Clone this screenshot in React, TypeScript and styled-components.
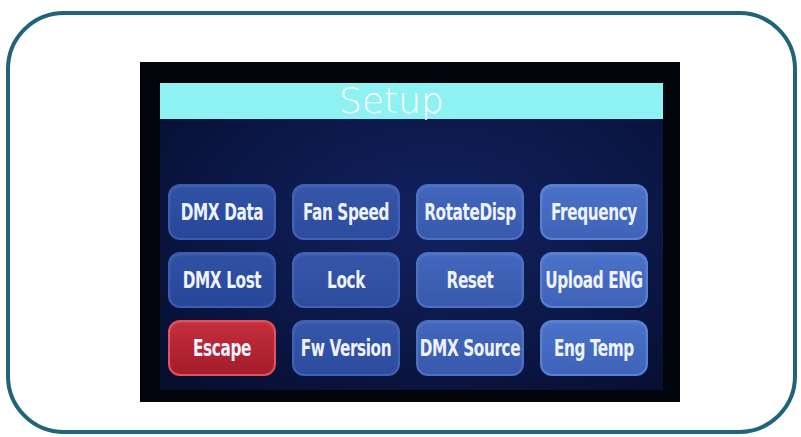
import React from "react";
import styled, { createGlobalStyle } from "styled-components";

const Global = createGlobalStyle`
  html, body { margin: 0; padding: 0; background: #ffffff; }
  body { width: 801px; height: 437px; overflow: hidden; }
`;

const Frame = styled.div`
  box-sizing: border-box;
  margin: 11px 0 0 6px;
  width: 791px;
  height: 423px;
  border: 4px solid #1f6479;
  border-radius: 58px;
  padding: 47px 0 0 130px;
  display: flex;
  align-items: flex-start;
`;

const Screen = styled.div`
  box-sizing: border-box;
  width: 540px;
  height: 340px;
  background: #02040c;
  padding: 21px 17px 12px 20px;
  display: flex;
`;

const Inner = styled.div`
  flex: 1;
  display: flex;
  flex-direction: column;
  background: radial-gradient(ellipse at 55% 45%, #122260 0%, #0b1746 55%, #060d2c 100%);
`;

const Header = styled.div`
  height: 36px;
  background: #8ef2f2;
  display: flex;
  align-items: center;
  justify-content: center;
  padding-right: 40px;
  color: #ffffff;
  font-family: "DejaVu Sans", "Liberation Sans", sans-serif;
  font-weight: 200;
  font-size: 36px;
  line-height: 1;
`;

const Grid = styled.div`
  display: grid;
  grid-template-columns: repeat(4, 108px);
  grid-auto-rows: 56px;
  column-gap: 16px;
  row-gap: 12px;
  margin: 65px 0 0 8px;
`;

const tones = [
  ["#3052a4", "#28469a", "#3b5cb0"],
  ["#3656aa", "#2d4c9e", "#4062b6"],
  ["#4267bc", "#3859ad", "#4c70c4"],
  ["#4a72c8", "#3f63b8", "#5a80d2"],
];

const Button = styled.div<{ $red?: boolean; $col: number }>`
  box-sizing: border-box;
  display: flex;
  align-items: center;
  justify-content: center;
  border-radius: 12px;
  white-space: nowrap;
  overflow: hidden;
  background: ${(p) =>
    p.$red
      ? "linear-gradient(180deg, #c42e3c 0%, #a41c2a 100%)"
      : `linear-gradient(180deg, ${tones[p.$col][0]} 0%, ${tones[p.$col][1]} 100%)`};
  border: 2px solid ${(p) => (p.$red ? "#e2525c" : tones[p.$col][2])};
  box-shadow: inset 0 1px 2px rgba(255, 255, 255, 0.12);
`;

const Label = styled.span`
  display: inline-block;
  font-family: "DejaVu Sans Condensed", "DejaVu Sans", sans-serif;
  font-weight: bold;
  font-size: 17px;
  letter-spacing: -0.4px;
  color: #eef3ff;
  transform: scaleY(1.3);
`;

const labels = [
  "DMX Data", "Fan Speed", "RotateDisp", "Frequency",
  "DMX Lost", "Lock", "Reset", "Upload ENG",
  "Escape", "Fw Version", "DMX Source", "Eng Temp",
];

export default function App() {
  return (
    <>
      <Global />
      <Frame>
        <Screen>
          <Inner>
            <Header>Setup</Header>
            <Grid>
              {labels.map((l, i) => (
                <Button key={l} $col={i % 4} $red={l === "Escape"}>
                  <Label>{l}</Label>
                </Button>
              ))}
            </Grid>
          </Inner>
        </Screen>
      </Frame>
    </>
  );
}
